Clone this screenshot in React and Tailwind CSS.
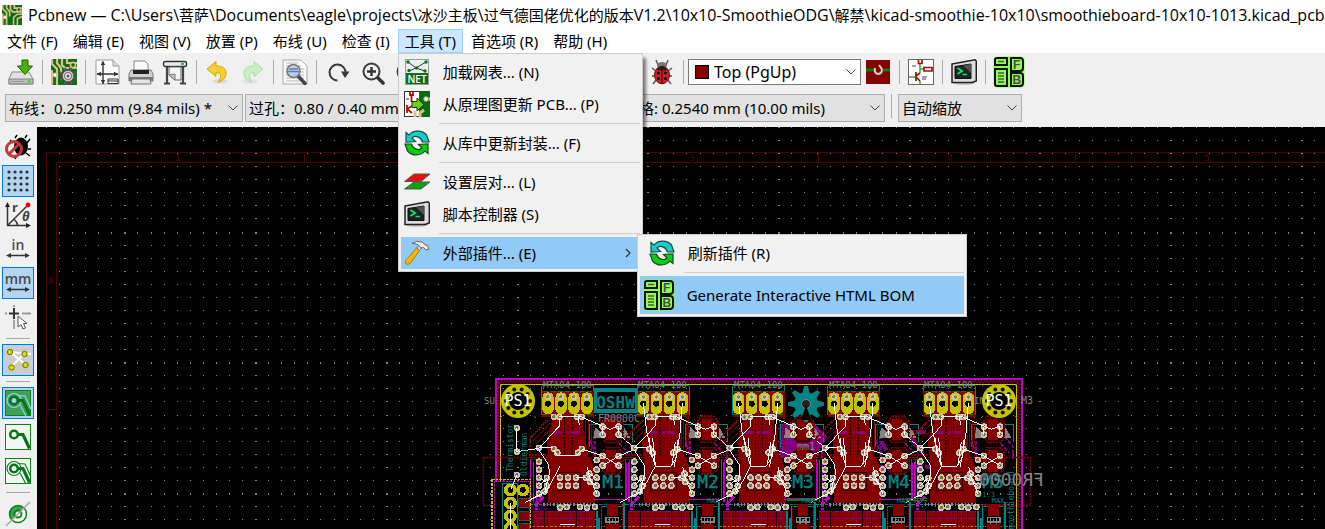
import React from "react";

const FONT = "font-['Noto_Sans','Noto_Sans_CJK_SC',sans-serif]";
const TITLE_FONT = "font-['Open_Sans','Noto_Sans_CJK_SC',sans-serif]";

/* ---------- icons ---------- */
const Svg = ({ s = 26, h, vb, children }) => (
  <svg width={s} height={h || s} viewBox={vb || `0 0 ${s} ${h || s}`} aria-hidden="true" className="block shrink-0">
    {children}
  </svg>
);

const BoardBase = () => (
  <>
    <rect width="26" height="26" fill="#0f6b14" />
    <path d="M1 0V5L6 10V26M6 0V4L10 9V15M11 0V6L14 9H26M16 0V4H26M1 11V26" stroke="#d9bf8c" strokeWidth="2.2" fill="none" />
    <circle cx="22" cy="6" r="2.6" fill="#0f6b14" stroke="#d9bf8c" strokeWidth="1.6" />
    <circle cx="4" cy="16" r="2" fill="#fff" stroke="#d9bf8c" />
  </>
);
const AppIcon = () => (
  <Svg s={20} vb="0 0 26 26">
    <BoardBase />
    <path d="M15 26V16L20 12H26M20 26V18L26 15" stroke="#d9bf8c" strokeWidth="2" fill="none" />
  </Svg>
);
const Save = () => (
  <Svg>
    <path d="M4 13H21L25 20V25H1V20Z" fill="#e2e2e2" stroke="#8a8a8a" />
    <path d="M1 20H25V25H1Z" fill="#bdbdbd" stroke="#858585" />
    <path d="M3 22.5H16" stroke="#999" />
    <rect x="20" y="21.500" width="2.500" height="2" fill="#1fd41f" />
    <path d="M14 1H20V7H24.500L17 15.500L9.500 7H14Z" fill="#4fae0a" stroke="#1d6400" />
  </Svg>
);
const Setup = () => (
  <Svg>
    <BoardBase />
    <g transform="translate(17 17)">
      <circle r="6.500" fill="none" stroke="#555" strokeWidth="4.500" strokeDasharray="3 2.100" />
      <circle r="5.800" fill="#c8c8c8" stroke="#555" />
      <circle r="3.500" fill="#eee" stroke="#666" />
      <circle r="1.500" fill="#555" />
    </g>
  </Svg>
);
const Page = () => (
  <Svg>
    <path d="M2 1H19L25 7V25H2Z" fill="#fdfdfd" stroke="#999" />
    <path d="M19 1V7H25" fill="#ddd" stroke="#999" />
    <path d="M9 3V25M3 15H24" stroke="#333" strokeWidth="1.400" />
    <path d="M9 1.500L6.800 6H11.200ZM2.500 15L7 12.800V17.200ZM24.500 15L20 12.800V17.200ZM9 25L6.800 21H11.200Z" fill="#333" />
    <path d="M14 20H24V24.500H14ZM14 22H24" fill="#fff" stroke="#333" />
  </Svg>
);
const Print = () => (
  <Svg>
    <path d="M6 2H17L20 5V12H6Z" fill="#f7f7f7" stroke="#888" />
    <path d="M3 11H23L25 15V22H1V15Z" fill="#d3d3d3" stroke="#777" />
    <path d="M5 11H21V15H5Z" fill="#222" />
    <path d="M1 18H25V22H1Z" fill="#777" />
    <path d="M4 20H22L23 25H3Z" fill="#e4e4e4" stroke="#777" />
  </Svg>
);
const Plot = () => (
  <Svg>
    <path d="M5 6V24M21 6V24M2 24.500H8M18 24.500H24" stroke="#444" strokeWidth="2.200" />
    <rect x="1.500" y="2.500" width="23" height="5" rx="2" fill="#eee" stroke="#333" strokeWidth="1.400" />
    <rect x="19" y="4" width="3" height="1.800" fill="#1c1" />
    <path d="M7 8H19V21H13L7 16Z" fill="#f4f4f4" stroke="#666" />
    <path d="M7 16L13 15V21Z" fill="#ccc" stroke="#777" />
  </Svg>
);
const Undo = ({ redo }) => (
  <Svg>
    <g transform={redo ? "translate(26 0) scale(-1 1)" : undefined} opacity={redo ? 0.7 : 1}>
      <ellipse cx="15" cy="22.500" rx="8" ry="2.500" fill="#ddd" />
      <path d="M2 10L11 2.500V7C18 7 21.500 10 21 15C20.500 19 17.500 22.500 13 23C16.500 19 17 13.500 11 13.500V17.500Z" fill={redo ? "#b9ecb4" : "#f6cf2b"} stroke={redo ? "#8fd28b" : "#d3a313"} />
    </g>
  </Svg>
);
const Find = () => (
  <Svg>
    <path d="M1 1H19L25 7V25H1Z" fill="#f8f8f8" stroke="#aaa" />
    <path d="M4 4H16M4 7H19M4 10H22M4 13H22M4 16H22M4 19H22M4 22H22" stroke="#bbb" />
    <path d="M16 17L23 24.500" stroke="#444" strokeWidth="3.500" strokeLinecap="round" />
    <circle cx="11.500" cy="12" r="6.500" fill="#b4c8e4" fillOpacity=".85" stroke="#777" strokeWidth="1.500" />
    <path d="M7 10H16M6 12.500H17" stroke="#5b80b5" strokeWidth="1.500" />
  </Svg>
);
const Redraw = () => (
  <Svg>
    <path d="M12.500 21.500A8 8 0 1 1 20.500 14" fill="none" stroke="#3a3a3a" strokeWidth="2" />
    <path d="M16 12.500H24.500L20 19Z" fill="#3a3a3a" />
  </Svg>
);
const Zoom = ({ minus }) => (
  <Svg>
    <path d="M18 18L24 24" stroke="#333" strokeWidth="3.600" strokeLinecap="round" />
    <circle cx="12.500" cy="12.500" r="8" fill="#f1f1f1" stroke="#3a3a3a" strokeWidth="2" />
    <path d={minus ? "M8 12.500H17" : "M8 12.500H17M12.500 8V17"} stroke="#333" strokeWidth="2.400" />
  </Svg>
);
const Bug = () => (
  <Svg>
    <path d="M9 6L7 1M17 6L19 1M7 12L3 9M19 12L23 9M6 17H3M20 17H23M7 21L4 25M19 21L22 25" stroke="#555" strokeWidth="1.400" />
    <ellipse cx="13" cy="6.500" rx="5" ry="3.500" fill="#777" />
    <ellipse cx="13" cy="16" rx="7.500" ry="8.800" fill="#d0202a" stroke="#6b0b0b" />
    <path d="M7.500 9.500Q13 6 18.500 9.500L17 11.500H9Z" fill="#222" />
    <path d="M13 9V25" stroke="#400" />
    <circle cx="9.500" cy="14" r="1.500" fill="#111" />
    <circle cx="16.500" cy="14" r="1.500" fill="#111" />
    <circle cx="9.500" cy="19.500" r="1.500" fill="#111" />
    <circle cx="16.500" cy="19.500" r="1.500" fill="#111" />
  </Svg>
);
const LayerPair = () => (
  <Svg s={24}>
    <rect width="24" height="24" fill="#840000" />
    <path d="M0 10H8M16 10H24" stroke="#008400" strokeWidth="3" />
    <path d="M9 8Q8 13.500 12 14Q17 13.500 15.500 8.500L13 5" fill="none" stroke="#e0cccc" strokeWidth="2" />
  </Svg>
);
const Schematic = () => (
  <Svg>
    <rect x=".500" y=".500" width="25" height="25" fill="#fff" stroke="#666" />
    <path d="M12 5V14M12 10H16M1 18H7M12 22V25" stroke="#3a3" strokeWidth="1.500" />
    <path d="M10.500 1V4.500H14V1M16 8.500H24V12H16ZM8 13V22M8 17L12 14M8 18L12 22" stroke="#a01010" strokeWidth="1.700" fill="none" />
    <path d="M4 7H8M14 18H19M14 20H18" stroke="#444" />
  </Svg>
);
const Terminal = () => (
  <Svg>
    <ellipse cx="13" cy="24" rx="11" ry="1.800" fill="#999" opacity=".6" />
    <path d="M1 5L24 .800L25.300 2V22L21 23.500H1Z" fill="#dcdcdc" stroke="#222" strokeWidth="1.500" />
    <path d="M4 7.500L20 5V19.500H4Z" fill="#1c2422" stroke="#111" />
    <path d="M12 6.500L20 5V14Z" fill="#4a5450" />
    <path d="M6.500 9L11 12L6.500 15" fill="none" stroke="#14e070" strokeWidth="2" />
    <path d="M11.500 15.500H16" stroke="#14e070" strokeWidth="1.500" />
  </Svg>
);
const Bom = () => (
  <Svg s={32}>
    <rect x=".500" y=".500" width="31" height="31" rx="4" fill="#8cff4f" />
    <g fill="#8cff4f" stroke="#111" strokeWidth="2">
      <path d="M4 2H14V9H2V4Q2 2 4 2Z" />
      <path d="M2 13H14V30H4Q2 30 2 28Z" />
      <path d="M18 2H27Q30 2 30 5V12Q30 15 27 15H18Z" />
      <path d="M18 17H27Q30 17 30 20V27Q30 30 27 30H18Z" />
    </g>
    <path d="M5 5.500H11M5 17H11M5 20H11M5 23H11M5 26H11" stroke="#4b5a45" strokeWidth="1.700" />
    <text x="20" y="13" fontSize="12" fontWeight="700" fill="#4b4b4b" fontFamily="Liberation Sans, sans-serif">F</text>
    <text x="19.500" y="28" fontSize="12" fontWeight="700" fill="#4b4b4b" fontFamily="Liberation Sans, sans-serif">B</text>
  </Svg>
);
const Net = () => (
  <Svg>
    <rect x="1.500" y=".500" width="23" height="25" fill="#e9efe9" stroke="#999" />
    <path d="M4 3L12 9L22 3M5 12L12 9L21 12" stroke="#333" fill="none" />
    <g fill="#0b6e1c"><circle cx="4" cy="3" r="1.700" /><circle cx="22" cy="3" r="1.700" /><circle cx="12.500" cy="9" r="1.700" /><circle cx="5" cy="11.500" r="1.700" /><circle cx="21" cy="12" r="1.700" /></g>
    <rect x="2" y="14" width="22" height="11" fill="#0b6e1c" />
    <text x="13" y="23.500" fontSize="10" fontWeight="600" fill="#fff" textAnchor="middle" fontFamily="Open Sans, sans-serif">NET</text>
  </Svg>
);
const UpdatePcb = () => (
  <Svg>
    <rect x=".500" y=".500" width="25" height="25" fill="#fff" stroke="#333" />
    <rect x="15" y="0" width="11" height="26" fill="#0b6b14" />
    <path d="M26 8H20M20 19L16 22V26M11 26V20" stroke="#d9bf8c" strokeWidth="3" fill="none" />
    <circle cx="22" cy="8" r="2.500" fill="#fff" stroke="#5a9a50" />
    <path d="M6 1V4H9V1M7.500 5V11M3 14V22M3 18L8 15M3 18L8 22" stroke="#b01010" strokeWidth="1.800" fill="none" />
    <path d="M2 8H5" stroke="#333" />
    <path d="M8 10.500H13V7L20 13.500L13 20V16.500H8Z" fill="#6cd01a" stroke="#163d00" />
  </Svg>
);
const Cycle = () => (
  <Svg>
    <path id="arc" d="M2 12V2.500L5 5C9 0 18 -.500 22.500 5L25 12H18.500C17 6.500 11 5 8 8L11.500 11.500Z" fill="#13d0c6" stroke="#1c4b48" strokeWidth="1.200" />
    <path d="M24 14V23.500L21 21C17 26 8 26.500 3.500 21L1 14H7.500C9 19.500 15 21 18 18L14.500 14.500Z" fill="#0fcb16" stroke="#134d14" strokeWidth="1.200" />
  </Svg>
);
const Layers = () => (
  <Svg>
    <path d="M10 13H26L17 20H.500Z" fill="#0fa013" stroke="#555" />
    <path d="M10 5H26L17 12.500H.500Z" fill="#e80f0f" stroke="#555" />
  </Svg>
);
const Hammer = () => (
  <Svg>
    <path d="M12.500 8L15.500 10.500L6.500 23Q4 25.500 1.500 23.500Q.500 22 2.500 19.500Z" fill="#f5b70d" stroke="#b07a05" />
    <path d="M13 8L15 5L18 7L15.500 10.500Z" fill="#ddd" stroke="#777" />
    <path d="M8 3.500Q12 0 18 2L21 4.500L24 6L24.500 9.500L22 10L19.500 7.500L17 8L14.500 5Q11 3 8 3.500Z" fill="#ececec" stroke="#666" />
  </Svg>
);

/* left bar */
const DrcOff = () => (
  <Svg>
    <path d="M10 4L12 1M20 4L22 1M8 9L5 6M22 9L25 5M23 15H26M21 19L25 22M12 21L10 25" stroke="#000" strokeWidth="1.400" />
    <ellipse cx="16" cy="12.500" rx="7" ry="9" fill="#000" />
    <circle cx="9" cy="15" r="7.500" fill="none" stroke="#c23a3a" strokeWidth="3" />
    <path d="M3.500 20.500L14.500 9.500" stroke="#c23a3a" strokeWidth="3" />
  </Svg>
);
const GridDots = () => (
  <Svg>
    {[4, 10, 16, 22].map((y) => [4, 10, 16, 22].map((x) => <circle key={`${x}-${y}`} cx={x} cy={y} r="1.600" fill="#333" />))}
  </Svg>
);
const Polar = () => (
  <Svg>
    <path d="M2.500 24V3M2 23.500H22M3 23L22 4M9 17.500Q12.500 20 12.500 23" stroke="#333" strokeWidth="1.500" fill="none" />
    <path d="M2.500 0L0 5H5ZM26 23.500L21 21V26Z" fill="#222" />
    <circle cx="23" cy="3" r="2.400" fill="#f00" />
    <text x="7" y="10" fontSize="13" fontWeight="700" fill="#444" fontFamily="Open Sans, sans-serif">r</text>
    <text x="17" y="19" fontSize="13" fontWeight="700" fontStyle="italic" fill="#444" fontFamily="Open Sans, sans-serif">θ</text>
  </Svg>
);
const Units = ({ t }) => (
  <Svg>
    <text x="13" y="14" fontSize="14" fontWeight="600" fill="#4a4a4a" textAnchor="middle" fontFamily="Open Sans, sans-serif">{t}</text>
    <path d="M4 19.500H22" stroke="#333" strokeWidth="1.500" />
    <path d="M1 19.500L6 17V22ZM25 19.500L20 17V22Z" fill="#333" />
  </Svg>
);
const CursorShape = () => (
  <Svg>
    <path d="M0 9.500H2M17 9.500H26M9 1V3M9 16V25" stroke="#999" strokeWidth="1.800" />
    <path d="M4 9.500H14M9 4V15" stroke="#333" strokeWidth="2" />
    <path d="M13 12V23L16 20.500L18 25L20.500 24L18.500 19.500H22Z" fill="#fff" stroke="#555" />
  </Svg>
);
const Ratsnest = () => (
  <Svg>
    <rect width="26" height="26" rx="2" fill="#ccc" />
    <path d="M5 5L21 18M19 7L6 20M5 5L26 7" stroke="#fff" strokeWidth="2" />
    {[[5, 5], [19.500, 7], [20.500, 18], [6.500, 20.500]].map(([x, y]) => (
      <circle key={x} cx={x} cy={y} r="2.700" fill="#d4e000" stroke="#6b7000" />
    ))}
  </Svg>
);
const ZoneIcon = ({ mode }) => {
  const fill = mode === "fill";
  return (
    <Svg>
      <rect x=".500" y=".500" width="25" height="25" fill={fill ? "#40a05a" : "#f4f6f4"} stroke="#0b8418" />
      {mode !== "none" && (
        <path d="M13 5.500L20 6L26 19M15 15L21 26" fill="none" stroke={fill ? "#a8cdee" : "#0b8418"} strokeWidth="1.200" />
      )}
      {mode !== "none" && <circle cx="9" cy="10.500" r="7" fill={fill ? "#40a05a" : "none"} stroke={fill ? "#a8cdee" : "#0b8418"} strokeWidth="1.200" />}
      <path d="M9 10.500H18L24.500 24.500" fill="none" stroke="#06761a" strokeWidth="3.200" />
      <circle cx="9" cy="10.500" r="3.800" fill={fill ? "#a8cdee" : "#fff"} stroke="#06761a" strokeWidth="2.600" />
    </Svg>
  );
};
const ViaSketch = () => (
  <Svg>
    <circle cx="13" cy="13" r="8.500" fill="#fff" stroke="#0b8418" strokeWidth="1.500" />
    <path d="M19 7A8.500 8.500 0 0 0 7 19Z" fill="#3f9d55" stroke="#0b8418" />
    <circle cx="13" cy="13" r="3.500" fill="#fff" stroke="#0b8418" strokeWidth="2" />
    <path d="M1 25L25 1" stroke="#aaa" strokeWidth="1.500" />
  </Svg>
);

/* ---------- controls ---------- */
const Tool = ({ label, children }) => (
  <button type="button" aria-label={label} className="flex h-[38px] w-[34px] shrink-0 items-center justify-center">{children}</button>
);
const VSep = () => <span className="mx-1 h-6 w-px shrink-0 bg-[#a9a9a9]" />;
const Chevron = () => (
  <svg width="10" height="6" viewBox="0 0 10 6" className="pointer-events-none absolute right-[5px] top-1/2 -mt-[3px]" aria-hidden="true">
    <path d="M.500 .500L5 5L9.500 .500" fill="none" stroke="#444" />
  </svg>
);
const Combo = ({ label, value, box, cls }) => (
  <div className={`relative shrink-0 ${box}`}>
    <select aria-label={label} className={`h-full w-full appearance-none border text-black outline-none ${cls}`} defaultValue={value}>
      <option>{value}</option>
    </select>
    <Chevron />
  </div>
);
const SideTool = ({ label, on, children }) => (
  <button type="button" aria-label={label} aria-pressed={!!on}
    className={`flex size-8 shrink-0 items-center justify-center border ${on ? "border-[#0078d7] bg-[#b3d4f2]" : "border-transparent"}`}>
    {children}
  </button>
);
const HSep = () => <span className="my-[3px] h-px w-6 shrink-0 bg-[#a9a9a9]" />;
const MenuSep = () => <div role="separator" className="ml-[38px] flex h-[7px] items-center"><span className="h-px w-full bg-[#d0d0d0]" /></div>;

/* Han runs are set one step smaller than the Latin text around them */
const Mixed = ({ text }) =>
  text.split(/([\u4e00-\u9fff]+)/).map((run, i) => (i % 2 ? <span key={i} className="text-[15px]">{run}</span> : run));

/* ---------- board canvas ---------- */
const P = 13.07;
let dots = "";
for (let j = 0; j < 31; j++)
  for (let i = 0; i < 110; i++) {
    const w = i % 10 === 6 ? 2 : 1;
    const h = j % 10 === 8 ? 2 : 1;
    dots += `M${Math.round(46 + i * P)} ${Math.round(127 + j * P)}h${w}v${h}h-${w}z`;
  }

const via = (x, y, k) => (
  <g key={k}>
    <circle cx={x} cy={y} r="10" fill="#c8c8c0" />
    <circle cx={x} cy={y} r="5" fill="#8c7028" />
  </g>
);
const VIAS = [
  [222, 141], [238, 141], [291, 141], [306, 141], [177, 234], [222, 237], [232, 248], [294, 248], [306, 237],
  [368, 170], [368, 194], [416, 170], [416, 194], [368, 258], [368, 287], [416, 258], [416, 287],
  [177, 275], [177, 299], [177, 323], [177, 347], [177, 371], [201, 324], [201, 348], [194, 364],
  [350, 270], [350, 299], [350, 323], [350, 347], [350, 371], [328, 311], [330, 335], [318, 324],
  [240, 323], [264, 323], [288, 323], [240, 347], [264, 347], [288, 347],
  [240, 413], [260, 411], [300, 411], [321, 413], [345, 411],
];

const Unit = ({ n }) => (
  <g transform={`translate(${n * 286} 0)`}>
    <g fill="none" stroke="#008484" strokeWidth="3">
      <path d="M186 48H342V135M186 48V135M330 163H458V215M330 163V230" />
    </g>
    <rect x="186" y="62" width="156" height="80" fill="#840000" />
    <path d="M190 66H338M190 134H338" stroke="#008400" strokeWidth="3" strokeDasharray="14 8" />
    <path d="M222 130H310V180L326 262H205L200 215Z" fill="#840000" />
    <path d="M205 150L150 205V255H205M340 140V262M152 200L200 150" stroke="#840000" strokeWidth="4" fill="none" strokeDasharray="6 3" />
    <path d="M160 212L210 160M168 222L212 178M318 150V250M326 150V250M334 150V250" stroke="#840000" strokeWidth="3" fill="none" />
    <path d="M254 140V255M276 140V255" stroke="#200000" strokeWidth="4" strokeDasharray="6 4" />
    <path d="M220 187H310" stroke="#840084" strokeWidth="8" strokeDasharray="26 14 8 6" />
    <path d="M205 262H330L345 300V398H205Z" fill="#840000" />
    <rect x="227" y="308" width="76" height="54" fill="#840000" stroke="#300000" strokeWidth="3" />
    <path d={n < 4 ? "M150 262H460M150 268H460" : "M150 262H400M150 268H400"} stroke="#840000" strokeWidth="3" strokeDasharray="8 4" />
    {n < 4 && <path d="M440 280V390M448 270V395M340 388H440" stroke="#c200c2" strokeWidth="3" />}
    <path d="M152 268V390M160 275V395M170 268V400" stroke="#c200c2" strokeWidth="3" />
    <path d="M190 380L170 400V420" stroke="#c200c2" fill="none" strokeWidth="9" strokeDasharray="18 3" />
    <path d="M330 210L350 270M345 180V260M430 200L455 230V270M418 220L445 250" stroke="#840084" fill="none" strokeWidth="5" strokeDasharray="12 4" />
    <path d="M345 172L362 185V205H340ZM432 172L452 205H425Z" fill="#848484" />
    {[178, 272].map((y) => (
      <g key={y}>
        <path d={`M378 ${y - 40}H416L430 ${y - 22}V${y + 22}L416 ${y + 40}H378L364 ${y + 22}V${y - 22}Z`} fill="#300000" stroke="#840000" strokeWidth="4" strokeDasharray="6 3" />
        <rect x="379" y={y - 31} width="30" height="64" fill="#840000" />
        <rect x="359" y={y - 22} width="18" height="42" fill="#840000" />
        <rect x="408" y={y - 22} width="18" height="42" fill="#840000" />
      </g>
    ))}
    {[204, 243, 282, 321].map((x) => (
      <g key={x}>
        <rect x={x - 17} y="67" width="34" height="66" rx="16" fill="#c2c200" />
        <circle cx={x} cy="81" r="10" fill="#c8c8b0" />
        <circle cx={x} cy="81" r="5" fill="#a08030" />
        <circle cx={x} cy="101" r="9" fill="#000" />
      </g>
    ))}
    <path d="M150 404H460" stroke="#008484" strokeWidth="4" strokeDasharray="10 3" />
    <path d="M190 404H350" stroke="#848484" strokeWidth="8" strokeDasharray="4 6" />
    <path d="M158 422H345V480H158Z" fill="#840000" />
    <path d="M158 426H345M158 446H345" stroke="#840084" strokeWidth="3" strokeDasharray="18 5" />
    <path d="M182 422V480M210 422V480M272 422V480M302 422V480M330 422V480" stroke="#840084" strokeWidth="2" strokeDasharray="12 8" />
    <path d="M158 471H460" stroke="#c2c200" strokeWidth="2" strokeDasharray="8 5" />
    <path d="M195 422V470M290 422V470M318 422V470" stroke="#200000" strokeWidth="3" />
    <path d="M350 422V480M358 445V480M432 395V480" stroke="#008484" strokeWidth="6" />
    <rect x="364" y="410" width="66" height="70" fill="none" stroke="#008484" strokeWidth="3" />
    <rect x="381" y="402" width="32" height="36" fill="#840000" />
    <path d="M366 404H428V470H366Z" fill="none" stroke="#840000" strokeWidth="3" strokeDasharray="5 3" />
    <path d="M378 443H416V456H378ZM388 443V466M406 443V466M397 446V456" fill="none" stroke="#848484" strokeWidth="4" />
    <path d="M378 462H416V480H378Z" fill="#840000" />
    {VIAS.map(([x, y], k) => via(x, y, k))}
    <g fill="none" stroke="#fff" strokeWidth="3">
      <path d={n < 4 ? "M238 139H300L390 178L416 168M368 170V194M416 170V194L464 234" : "M238 139H300L390 178L416 168M368 170V194M416 170V194"} />
      <path d="M177 234L240 168V145M177 234H215M177 240L206 285L208 310L195 365L135 397" />
      <path d={n < 4 ? "M306 237L368 258L416 287M368 287L416 258L480 232H500" : "M306 237L368 258L416 287M368 287L416 258"} />
      <path d="M294 141L298 166M240 288L218 330L195 370M322 290L328 320L345 360L350 372M177 323L205 340M318 324L350 347M328 311L350 325M177 347L201 324M288 323H318" />
      <path d={n ? "M204 98L214 185L232 262L240 289H286L304 262L308 210M232 205L240 285M222 205L228 262M300 215L290 285M308 235L296 290M321 98L314 190L304 250" : "M238 145V168L202 206M222 240L232 256H290L306 240"} />
      <path d="M240 463H285" />
    </g>
  </g>
);

const Hole = ({ x }) => (
  <g>
    <circle cx={x} cy="401" r="13" fill="#000" stroke="#c2c200" strokeWidth="8" />
    {Array.from({ length: 10 }, (_, i) => (
      <circle key={i} cx={x + 12 * Math.cos(i * 0.628)} cy={401 + 12 * Math.sin(i * 0.628)} r="2" fill="#111" />
    ))}
    <path d={`M${x - 18} 384l36 34M${x - 18} 418l36 -34`} stroke="#848484" strokeDasharray="3 44" />
    <text x={x} y="406" fontSize="15" fill="#fff" textAnchor="middle">PS1</text>
  </g>
);

const gear = Array.from({ length: 32 }, (_, i) => {
  const r = i % 4 < 2 ? 18 : 12;
  const a = (i / 32) * Math.PI * 2 - 0.1;
  return `${806 + r * Math.cos(a)},${404 + r * Math.sin(a)}`;
}).join(" ");

const Canvas = () => (
  <svg className="block h-full min-h-[402px] w-full" role="img" aria-label="PCB layout">
    <rect width="100%" height="100%" fill="#000" />
    <g transform="translate(-37 -127)" fontFamily="DejaVu Sans Mono, monospace">
      <path d={dots} fill="#848484" shapeRendering="crispEdges" />
      <g stroke="#4c0000" fill="none" shapeRendering="crispEdges">
        <path d="M46.500 900V152.500H3000M56.500 900V162.500H3000M304.500 153V162M561.500 153V162M818.500 153V162M1075.500 153V162M47 409.500H56" />
      </g>
      <g fontSize="9" fill="#5c0000" textAnchor="middle">
        {[178, 435, 692, 950, 1207].map((x, i) => <text key={x} x={x} y="161">{i + 1}</text>)}
        <text x="51" y="284">A</text>
      </g>
      <g fill="none">
        <rect x="496" y="379" width="526" height="400" stroke="#c200c2" strokeWidth="2" />
        <rect x="498" y="381" width="522" height="400" stroke="#c200c2" strokeDasharray="1 2" />
        <rect x="499" y="382.500" width="519" height="400" stroke="#840000" strokeWidth="2" strokeDasharray="2 1" />
        <rect x="500.500" y="384.500" width="516" height="400" stroke="#c2c200" />
      </g>
      <path d="M483.500 457.500H548M483.500 457.500V505.500H548M970 457.500H1030.500V505.500H970" fill="none" stroke="#840000" strokeWidth="1.500" strokeDasharray="2 1" />
      <g transform="translate(480 370) scale(.333333)" shapeRendering="crispEdges">
        <path d="M900 165H940L980 230L960 280L900 260ZM1000 160L1040 200L990 290L930 300Z" fill="#840084" />
        <path d="M1200 185H1340M1205 215L1230 260M1290 200L1330 250M1190 292H1350" fill="none" stroke="#840084" strokeWidth="12" strokeDasharray="30 6" />
        <path d="M110 338L200 400V480H110Z" fill="#300030" />
        {[0, 1, 2, 3, 4].map((n) => <Unit key={n} n={n} />)}
        <path d="M36 328H152V480M36 328V480M50 345H150" fill="none" stroke="#c2c200" strokeWidth="4" strokeDasharray="8 3" />
        <rect x="44" y="334" width="106" height="150" fill="#000" stroke="#c200c2" strokeWidth="3" strokeDasharray="8 3" />
        <rect x="68" y="340" width="46" height="140" fill="none" stroke="#008484" strokeWidth="3" />
        {[360, 399, 438, 474].map((y) => (
          <circle key={y} cx="91" cy={y} r="14" fill="none" stroke="#c2c200" strokeWidth="11" />
        ))}
        <circle cx="129" cy="360" r="14" fill="none" stroke="#c2c200" strokeWidth="11" />
        {[398, 438, 474].map((y) => <rect key={y} x="116" y={y - 13} width="34" height="28" rx="5" fill="#840000" stroke="#008484" strokeWidth="2" />)}
        {[[111, 174], [111, 245], [111, 315]].map(([x, y]) => via(x, y, y))}
        <path d="M111 174V245L177 235M111 315L92 358M91 399V477M135 397L190 370" fill="none" stroke="#fff" strokeWidth="3" />
        <path d="M342 55H474V128H342ZM352 66H464V118H352Z" fill="#008484" fillRule="evenodd" />
        <path d="M1280 385H1340M1280 392H1340M920 385H1010M920 392H1010" stroke="#008400" strokeWidth="3" />
      </g>
      <polygon points={gear} fill="#008484" />
      <circle cx="806" cy="404" r="4.500" fill="#222" stroke="#848484" />
      <path d="M806 405L801 420H811Z" fill="#000" />
      <g fill="#008484">
        <text x="615.500" y="408" fontSize="16" fontWeight="700" textAnchor="middle">OSHW</text>
        {[613, 708, 803, 899, 993].map((x, i) => (
          <text key={x} x={x} y="488" fontSize="18" textAnchor="middle" stroke="#008484" strokeWidth=".4">{`M${i + 1}`}</text>
        ))}
        {[713, 808, 903, 998].map((x) => <text key={x} x={x} y="503" fontSize="7" textAnchor="middle">MAX</text>)}
        <text fontSize="8" transform="translate(513 472) rotate(-90)">Thermistor</text>
        <text fontSize="8" transform="translate(527 476) rotate(-90)">Oldierman</text>
        <text fontSize="8" transform="translate(1014 534) rotate(-90)">Smoothieboard</text>
        <text x="978" y="497" fontSize="7">v1.3</text>
      </g>
      <g fill="#848484" fontSize="9">
        {[543, 638, 734, 829, 924].map((x) => <text key={x} x={x} y="388">MTA04-100</text>)}
        <text x="484" y="404">SU</text>
        <text x="974" y="404">IN</text>
        <text x="1021" y="404" fontSize="10">M3</text>
        <text x="598" y="422" fontSize="10">FR0000C</text>
        <text x="797" y="450" fontSize="10">mm1</text>
        <text fontSize="18" transform="translate(1044 486) scale(-1 1)">FR0000</text>
      </g>
      <Hole x={518} />
      <Hole x={999} />
    </g>
  </svg>
);

/* ---------- menus ---------- */
const TOOLS_MENU = [
  { t: "加载网表... (N)", I: Net },
  { t: "从原理图更新 PCB... (P)", I: UpdatePcb },
  null,
  { t: "从库中更新封装... (F)", I: Cycle },
  null,
  { t: "设置层对... (L)", I: Layers },
  { t: "脚本控制器 (S)", I: Terminal },
  null,
];
const MENUS = ["文件 (F)", "编辑 (E)", "视图 (V)", "放置 (P)", "布线 (U)", "检查 (I)", "工具 (T)", "首选项 (R)", "帮助 (H)"];
const PANEL = "absolute z-10 border border-[#ccc] bg-[#f1f1f1] shadow-[4px_4px_3px_-1px_rgba(0,0,0,0.5)]";

const ToolsMenu = () => (
  <div role="menu" className={`${PANEL} -left-px top-full mt-px w-[245px] p-0.5`}>
    {TOOLS_MENU.map((m, i) =>
      m ? (
        <button key={i} type="button" role="menuitem" className="flex h-8 w-full items-center gap-3.25 whitespace-nowrap pl-[3px] text-left">
          <m.I />{m.t}
        </button>
      ) : <MenuSep key={i} />
    )}
    <div className="relative pr-[3px]">
      <button type="button" role="menuitem" aria-haspopup="menu" aria-expanded="true" className="flex h-8 w-full items-center gap-3.25 whitespace-nowrap bg-[#91c9f7] pl-[3px] pr-1.5 text-left">
        <Hammer />
        <span className="grow">外部插件... (E)</span>
        <svg width="6" height="10" viewBox="0 0 6 10" aria-hidden="true"><path d="M1 1L5 5L1 9" fill="none" stroke="#333" strokeWidth="1.200" /></svg>
      </button>
      <div role="menu" className={`${PANEL} -top-[3px] left-[236px] w-[330px] p-0.5`}>
        <button type="button" role="menuitem" className="flex h-8 w-full items-center gap-3.25 whitespace-nowrap pl-[9px] text-left">
          <Cycle />刷新插件 (R)
        </button>
        <div className="pl-[6px]"><MenuSep /></div>
        <button type="button" role="menuitem" className="flex h-[38px] w-full items-center gap-3 whitespace-nowrap bg-[#91c9f7] pl-[3px] text-left">
          <Bom />Generate Interactive HTML BOM
        </button>
      </div>
    </div>
  </div>
);

export default function App() {
  return (
    <div className={`flex min-h-screen flex-col overflow-hidden bg-[#f0f0f0] text-[15px] leading-5 text-black ${FONT}`}>
      <header className="flex h-[29px] items-center gap-1.5 bg-white pl-0.5">
        <AppIcon />
        <h1 className={`whitespace-nowrap text-base leading-5 ${TITLE_FONT}`}>
          <Mixed text={"Pcbnew — C:\\Users\\菩萨\\Documents\\eagle\\projects\\冰沙主板\\过气德国佬优化的版本V1.2\\10x10-SmoothieODG\\解禁\\kicad-smoothie-10x10\\smoothieboard-10x10-1013.kicad_pcb"} />
        </h1>
      </header>
      <nav className="flex h-6 gap-px bg-white" aria-label="Main menu">
        {MENUS.map((m, i) =>
          i === 6 ? (
            <div key={m} className="relative border border-[#99d1ff] bg-[#cce8ff]">
              <button type="button" aria-expanded="true" className="h-full whitespace-nowrap px-1.5">{m}</button>
              <ToolsMenu />
            </div>
          ) : (
            <button key={m} type="button" className="whitespace-nowrap px-[7px]">{m}</button>
          )
        )}
      </nav>
      <div className="flex h-[38px] items-center pl-1">
        <Tool label="Save"><Save /></Tool><VSep />
        <Tool label="Board setup"><Setup /></Tool><VSep />
        <Tool label="Page settings"><Page /></Tool>
        <Tool label="Print"><Print /></Tool>
        <Tool label="Plot"><Plot /></Tool><VSep />
        <Tool label="Undo"><Undo /></Tool>
        <Tool label="Redo"><Undo redo /></Tool><VSep />
        <Tool label="Find"><Find /></Tool><VSep />
        <Tool label="Redraw"><Redraw /></Tool>
        <Tool label="Zoom in"><Zoom /></Tool>
        <Tool label="Zoom out"><Zoom minus /></Tool>
        <Tool label="Zoom to fit"><Zoom /></Tool><VSep />
        <Tool label="Footprint editor"><Schematic /></Tool>
        <Tool label="Footprint viewer"><Find /></Tool><VSep />
        <Tool label="Load netlist"><Net /></Tool>
        <Tool label="Update board"><UpdatePcb /></Tool>
        <Tool label="Zoom to selection"><Zoom /></Tool>
        <Tool label="Design rules check"><Bug /></Tool><VSep />
        <div className="relative">
          <Combo label="Layer" value="Top (PgUp)" box="h-[26px] w-[173px]" cls="border-[#7a7a7a] bg-white pl-[25px] text-base" />
          <span className="pointer-events-none absolute left-[7px] top-1.5 size-3.5 border border-black bg-[#840000]" />
        </div>
        <Tool label="Layer pair"><LayerPair /></Tool><VSep />
        <Tool label="Schematic"><Schematic /></Tool><VSep />
        <Tool label="Scripting console"><Terminal /></Tool><VSep />
        <button type="button" aria-label="Interactive BOM" className="flex h-[38px] w-[38px] shrink-0 items-center justify-center"><Bom /></button>
      </div>
      <div className="flex h-9 items-start gap-0.5 pl-[5px] pt-[3px]">
        <Combo label="Track width" value="布线：0.250 mm (9.84 mils) *" box="h-7 w-[238px]" cls="border-[#adadad] bg-[#e1e1e1] pl-[3px]" />
        <Combo label="Via size" value="过孔：0.80 / 0.40 mm (31.5 / 15.7 mils) *" box="h-7 w-[366px]" cls="border-[#adadad] bg-[#e1e1e1] pl-[3px]" />
        <Combo label="Grid" value="网格: 0.2540 mm (10.00 mils)" box="h-7 w-[272px]" cls="border-[#adadad] bg-[#e1e1e1] pl-[10px]" />
        <VSep />
        <Combo label="Zoom" value="自动缩放" box="h-7 w-[124px]" cls="border-[#adadad] bg-[#e1e1e1] pl-[3px]" />
      </div>
      <div className="flex grow">
        <aside className="flex h-[402px] w-[37px] shrink-0 flex-col items-center gap-0.5 overflow-hidden pr-px pt-1">
          <SideTool label="Enable DRC"><DrcOff /></SideTool>
          <SideTool label="Show grid" on><GridDots /></SideTool>
          <SideTool label="Polar coordinates"><Polar /></SideTool>
          <SideTool label="Inches"><Units t="in" /></SideTool>
          <SideTool label="Millimeters" on><Units t="mm" /></SideTool>
          <SideTool label="Cursor shape"><CursorShape /></SideTool>
          <HSep />
          <SideTool label="Show ratsnest" on><Ratsnest /></SideTool>
          <HSep />
          <SideTool label="Show filled zones" on><ZoneIcon mode="fill" /></SideTool>
          <SideTool label="Hide filled areas"><ZoneIcon mode="none" /></SideTool>
          <SideTool label="Show zone outlines"><ZoneIcon mode="outline" /></SideTool>
          <HSep />
          <SideTool label="Sketch vias"><ViaSketch /></SideTool>
        </aside>
        <main className="min-w-0 grow bg-black"><Canvas /></main>
      </div>
    </div>
  );
}
